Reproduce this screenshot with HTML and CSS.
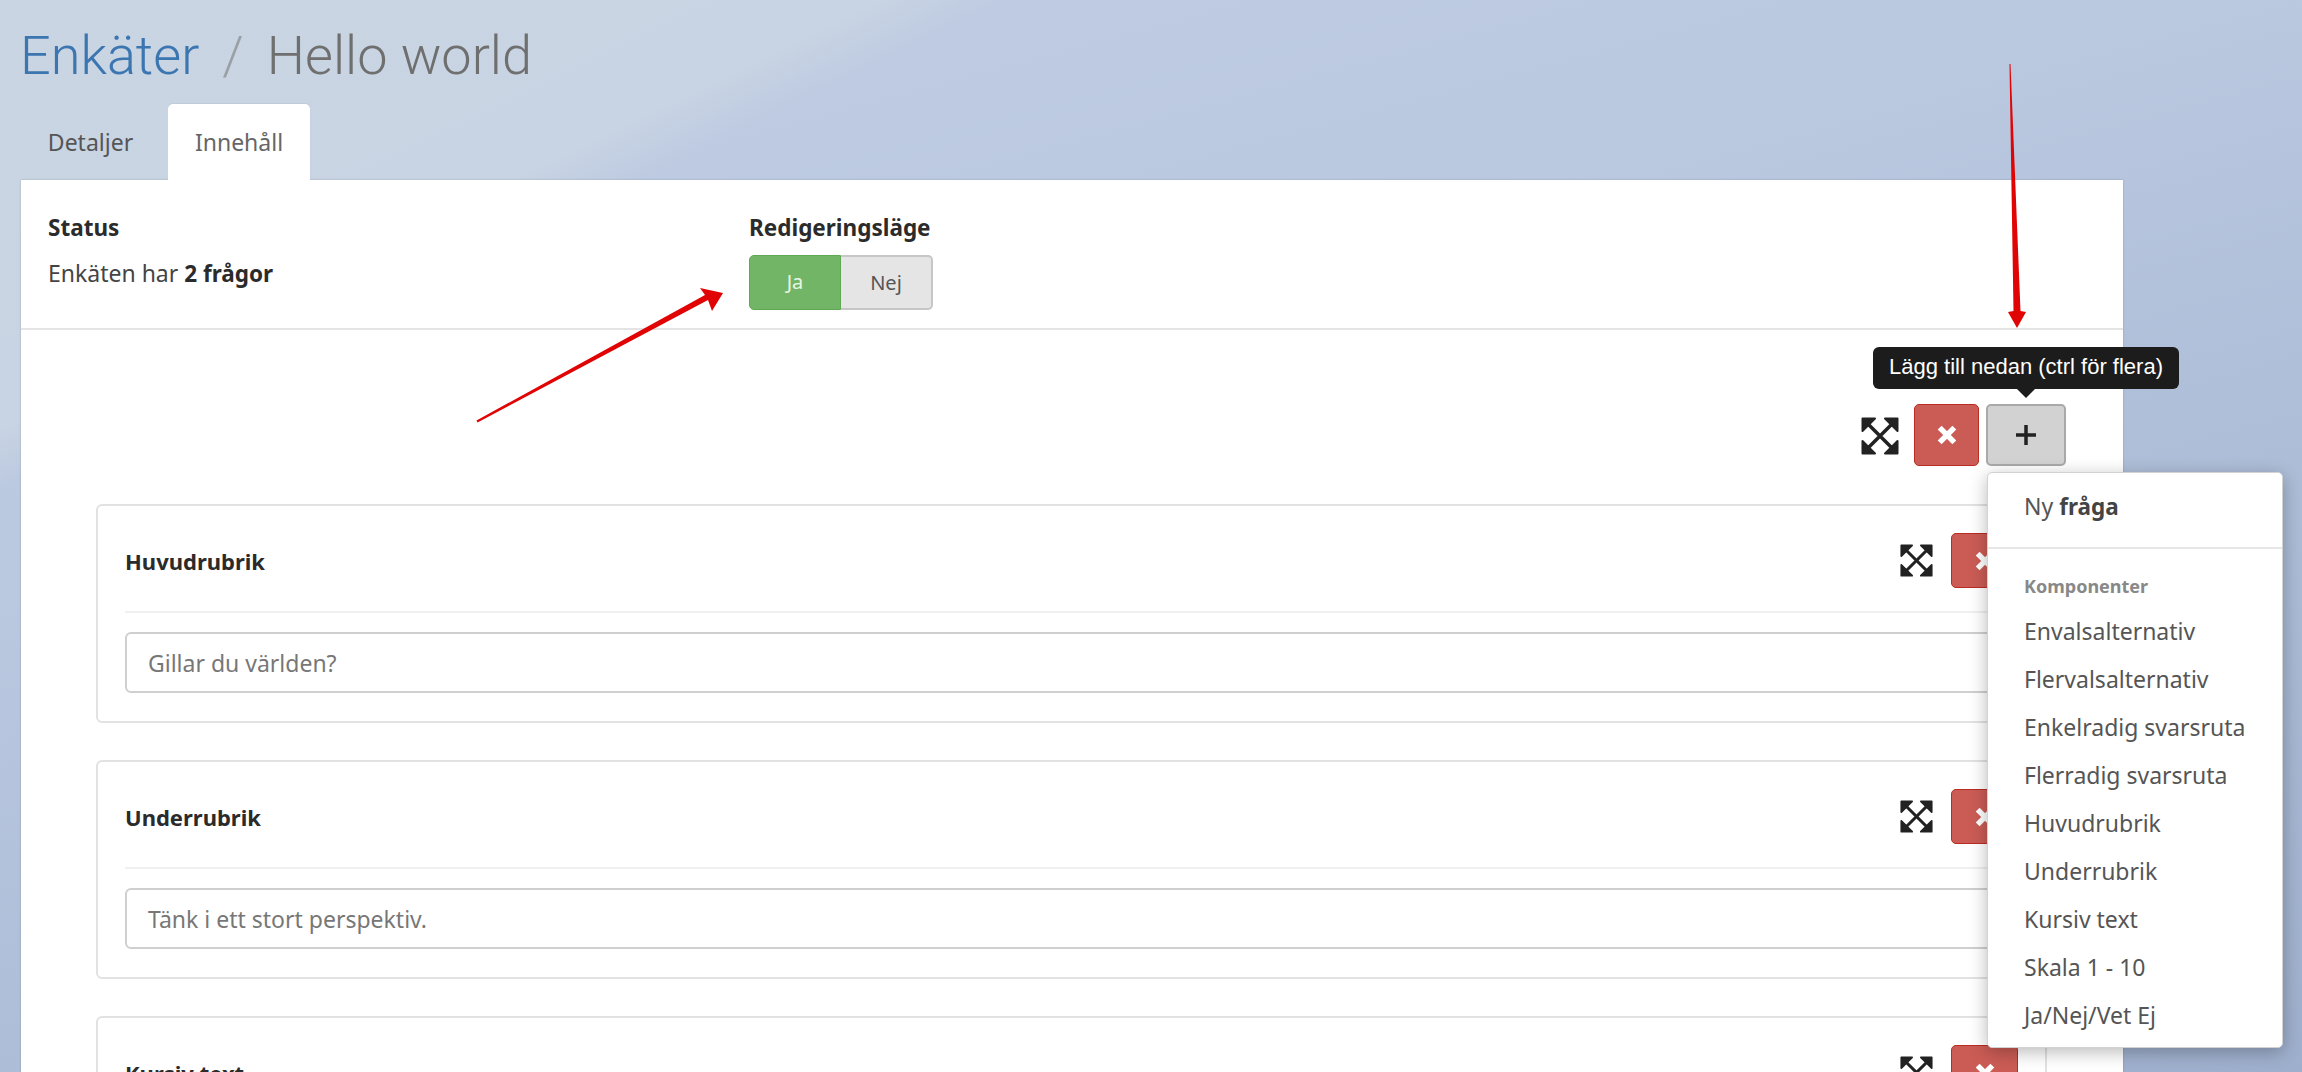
FILE: index.html
```html
<!DOCTYPE html>
<html lang="sv">
<head>
<meta charset="utf-8">
<title>Enkäter / Hello world</title>
<link rel="stylesheet" href="styles.css">
</head>
<body>
<main class="page">
  <h1 class="title"><a class="crumb">Enkäter</a><span class="sep">/</span><span class="current">Hello world</span></h1>
  <nav class="tabs">
    <a class="tab">Detaljer</a>
    <a class="tab tab-active">Innehåll</a>
  </nav>
  <section class="panel">
    <header class="panel-head">
      <div class="status">
        <strong class="label">Status</strong>
        <p class="status-text">Enkäten har <b>2 frågor</b></p>
      </div>
      <div class="mode">
        <strong class="label">Redigeringsläge</strong>
        <div class="toggle"><span class="toggle-on">Ja</span><span class="toggle-off">Nej</span></div>
      </div>
    </header>
    <div class="panel-body">
      <div class="toolbar">
        <svg class="expand" viewBox="0 0 38 38"><use href="#expand-icon"/></svg>
        <button class="btn btn-red btn-lg"><svg class="x" viewBox="0 0 18 18"><path d="M3 3L15 15M15 3L3 15"/></svg></button>
        <div class="add-wrap">
          <div class="tooltip">Lägg till nedan (ctrl för flera)</div>
          <button class="btn btn-grey"><svg class="plus" viewBox="0 0 24 24"><path d="M12 2V22M2 12H22"/></svg></button>
          <div class="menu">
            <a class="menu-item">Ny <b>fråga</b></a>
            <hr class="menu-rule">
            <div class="menu-head">Komponenter</div>
            <a class="menu-item">Envalsalternativ</a>
            <a class="menu-item">Flervalsalternativ</a>
            <a class="menu-item">Enkelradig svarsruta</a>
            <a class="menu-item">Flerradig svarsruta</a>
            <a class="menu-item">Huvudrubrik</a>
            <a class="menu-item">Underrubrik</a>
            <a class="menu-item">Kursiv text</a>
            <a class="menu-item">Skala 1 - 10</a>
            <a class="menu-item">Ja/Nej/Vet Ej</a>
          </div>
        </div>
      </div>
      <article class="card">
        <div class="card-head">
          <strong class="card-title">Huvudrubrik</strong>
          <svg class="expand expand-sm" viewBox="0 0 38 38"><use href="#expand-icon"/></svg>
          <button class="btn btn-red"><svg class="x" viewBox="0 0 18 18"><path d="M3 3L15 15M15 3L3 15"/></svg></button>
        </div>
        <div class="field">Gillar du världen?</div>
      </article>
      <article class="card">
        <div class="card-head">
          <strong class="card-title">Underrubrik</strong>
          <svg class="expand expand-sm" viewBox="0 0 38 38"><use href="#expand-icon"/></svg>
          <button class="btn btn-red"><svg class="x" viewBox="0 0 18 18"><path d="M3 3L15 15M15 3L3 15"/></svg></button>
        </div>
        <div class="field">Tänk i ett stort perspektiv.</div>
      </article>
      <article class="card">
        <div class="card-head">
          <strong class="card-title">Kursiv text</strong>
          <svg class="expand expand-sm" viewBox="0 0 38 38"><use href="#expand-icon"/></svg>
          <button class="btn btn-red"><svg class="x" viewBox="0 0 18 18"><path d="M3 3L15 15M15 3L3 15"/></svg></button>
        </div>
      </article>
    </div>
  </section>
</main>
<svg class="annotations" viewBox="0 0 2302 1072">
  <path class="ann" d="M476.500 420.500L477.500 422.500L708 300L712 311L723 293L700 288L705 295Z"/>
  <path class="ann" d="M2009.500 64L2010.500 64L2020.500 311L2026 312L2017 328L2008 312L2013.500 311Z"/>
</svg>
<svg class="defs" width="0" height="0">
  <symbol id="expand-icon" viewBox="0 0 38 38">
    <path class="ex-line" d="M6 6L32 32M32 6L6 32"/>
    <path class="ex-head" d="M1.500 1.500H14L1.500 14ZM36.500 1.500H24L36.500 14ZM1.500 36.500H14L1.500 24ZM36.500 36.500H24L36.500 24Z"/>
  </symbol>
</svg>
</body>
</html>
```
FILE: styles.css
```css
* { box-sizing: border-box; }
html, body { margin: 0; height: 100%; }
body {
  width: 2302px;
  height: 1072px;
  overflow: hidden;
  position: relative;
  font-family: "Noto Sans", "Roboto", sans-serif;
  font-size: 23px;
  color: #333;
  background:
    linear-gradient(154deg, #cad5e3 0, #c8d4e3 385px, rgba(200, 212, 227, 0) 440px),
    linear-gradient(165deg, #c2cee3 0, #bac8e0 35%, #a9b9d4 75%, #9eafcd 100%);
}
.page { padding-left: 20px; }
.title {
  margin: 0;
  height: 104px;
  padding-top: 21px;
  font-family: "Roboto", sans-serif;
  font-size: 54px;
  line-height: 70px;
  font-weight: 300;
  display: flex;
}
.crumb { color: #3c76b0; }
.sep { color: #9aa0a6; margin: 0 23px; }
.current { color: #6f6f6f; }
.tabs { display: flex; height: 76px; padding-left: 1px; }
.tab {
  width: 139px;
  margin-right: 8px;
  text-align: center;
  line-height: 76px;
  color: #555;
}
.tab-active {
  width: 142px;
  background: #fff;
  border-radius: 5px 5px 0 0;
  color: #666;
  box-shadow: 0 -1px 1px rgba(0, 0, 0, .05);
}
.panel {
  margin-left: 1px;
  width: 2102px;
  height: 892px;
  background: #fff;
  box-shadow: 0 0 2px rgba(0, 0, 0, .2);
}
.panel-head {
  height: 150px;
  padding: 33px 27px 0;
  display: flex;
  border-bottom: 2px solid #e4e4e4;
}
.status { width: 701px; }
.label { display: block; font-size: 22.500px; font-weight: 700; color: #2b2b2b; line-height: 30px; }
.status-text { margin: 15px 0 0; line-height: 30px; color: #444; }
.status-text b { font-size: 22.500px; color: #2b2b2b; }
.toggle {
  margin-top: 12px;
  display: flex;
  width: 184px;
  height: 55px;
  font-size: 20px;
  line-height: 51px;
  text-align: center;
}
.toggle-on {
  width: 92px;
  background: #72b566;
  border: 1px solid #5fa853;
  border-radius: 5px 0 0 5px;
  color: #e9f5e6;
}
.toggle-off {
  width: 92px;
  background: #e5e5e5;
  border: 2px solid #c6c6c6;
  border-left: 0;
  border-radius: 0 5px 5px 0;
  color: #555;
}
.panel-body { padding: 0 75px; position: relative; }
.toolbar {
  height: 174px;
  padding: 74px 0 0;
  margin-right: -18px;
  display: flex;
  justify-content: flex-end;
  align-items: flex-start;
}
.expand { width: 38px; height: 38px; margin: 13px 15px 0 0; }
.expand-sm { width: 33px; height: 33px; margin: 0 18px 0 0; }
.ex-line { stroke: #222; stroke-width: 3.500; fill: none; }
.ex-head { fill: #222; stroke: #222; stroke-width: 2; stroke-linejoin: round; }
.btn {
  padding: 0;
  display: flex;
  align-items: center;
  justify-content: center;
  border-radius: 5px;
}
.btn-red {
  width: 67px;
  height: 55px;
  background: #cb5c55;
  border: 1px solid #b92c24;
}
.btn-lg { width: 65px; height: 62px; }
.btn-grey {
  width: 80px;
  height: 62px;
  background: #d2d2d2;
  border: 2px solid #a9a9a9;
}
.x { width: 22px; height: 22px; fill: none; stroke: #fff; stroke-width: 4.500; }
.plus { width: 24px; height: 24px; fill: none; stroke: #222; stroke-width: 3.500; }
.add-wrap { position: relative; margin-left: 7px; }
.tooltip {
  position: absolute;
  left: -113px;
  top: -57px;
  width: 306px;
  height: 42px;
  background: #1c1c1c;
  border-radius: 6px;
  color: #fff;
  font-family: "Liberation Sans", Arial, sans-serif;
  font-size: 22px;
  line-height: 40px;
  text-align: center;
  white-space: nowrap;
}
.tooltip::after {
  content: "";
  position: absolute;
  left: 144px;
  top: 42px;
  border: 9px solid transparent;
  border-top-color: #1c1c1c;
  border-bottom-width: 0;
}
.menu {
  position: absolute;
  z-index: 5;
  left: 1px;
  top: 68px;
  width: 296px;
  height: 576px;
  padding: 9px 0;
  background: #fff;
  border-radius: 5px;
  border: 1px solid #d2d2d2;
  box-shadow: 0 4px 18px rgba(0, 0, 0, .28);
}
.menu-item { display: block; height: 48px; line-height: 48px; padding-left: 36px; color: #555; }
.menu-item b { font-size: 22.500px; color: #444; }
.menu-rule { margin: 17px 0 15px; border: 0; border-top: 2px solid #e6e6e6; }
.menu-head {
  padding-left: 36px;
  height: 48px;
  line-height: 48px;
  margin-top: -2px;
  margin-bottom: -3px;
  font-size: 18px;
  font-weight: 700;
  color: #888;
}
.card {
  width: 1951px;
  height: 219px;
  margin-bottom: 37px;
  padding: 0 27px;
  border: 2px solid #e2e2e2;
  border-radius: 6px;
}
.card-head {
  height: 107px;
  padding-top: 4px;
  display: flex;
  align-items: center;
  border-bottom: 2px solid #efefef;
}
.card-title { flex: 1; font-size: 22px; font-weight: 700; color: #2b2b2b; }
.field {
  margin-top: 19px;
  height: 61px;
  padding-left: 21px;
  line-height: 58px;
  border: 2px solid #cfcfcf;
  border-radius: 6px;
  color: #777;
}
.annotations { position: absolute; left: 0; top: 0; width: 2302px; height: 1072px; z-index: 9; pointer-events: none; }
.ann { fill: #e00404; }
.defs { position: absolute; }
```
